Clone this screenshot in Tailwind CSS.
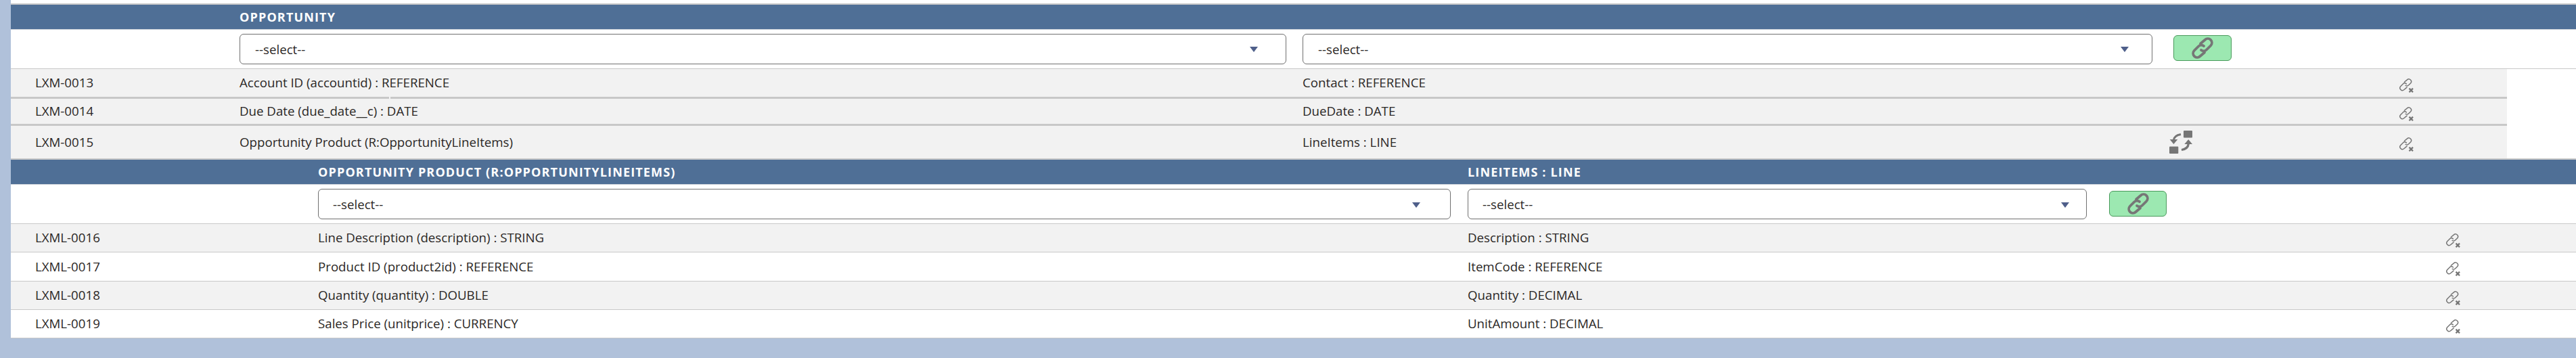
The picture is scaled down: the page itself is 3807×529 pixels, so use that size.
<!DOCTYPE html>
<html>
<head>
<meta charset="utf-8">
<script src="https://cdn.jsdelivr.net/npm/@tailwindcss/browser@4"></script>
</head>
<body class="bg-[#b0c1da] font-['Open_Sans',sans-serif] text-[18.7px] text-[#2b2826]">
<svg width="0" height="0" class="absolute">
  <defs>
    <symbol id="chain" viewBox="0 0 34 34">
      <g fill="none" stroke="currentColor" stroke-width="3.8" stroke-linecap="round">
        <path d="M14 10.5 L20.76 4.76 A6 6 0 0 1 29.24 13.24 L23 19.5 A6 6 0 0 1 15 20"/>
        <path d="M20 23.5 L13.24 29.24 A6 6 0 0 1 4.76 20.76 L11 14.5 A6 6 0 0 1 19 14"/>
      </g>
    </symbol>
    <symbol id="unlink" viewBox="0 0 22 22">
      <g transform="scale(.6)" fill="none" stroke="currentColor" stroke-width="2.5" stroke-linecap="round">
        <path d="M14 10.5 L20.76 4.76 A6 6 0 0 1 29.24 13.24 L24.5 18 A6 6 0 0 1 17 19"/>
        <path d="M20 23.5 L13.24 29.24 A6 6 0 0 1 4.76 20.76 L11 14.5 A6 6 0 0 1 19 15"/>
      </g>
      <path d="M15.5 15.6 L21 21.2 M21 15.6 L15.5 21.2" stroke="currentColor" stroke-width="2.3"/>
    </symbol>
    <symbol id="merge" viewBox="0 0 34 34">
      <rect x="21" y="0" width="13" height="10.5" rx="1" fill="currentColor"/>
      <rect x="0" y="23.5" width="13.3" height="10.5" rx="1" fill="currentColor"/>
      <path d="M17 5.5 C11 6.5 7 9 6.4 14" fill="none" stroke="currentColor" stroke-width="3.2"/>
      <path d="M0.7 13 H12.3 L6.4 20 Z" fill="currentColor"/>
      <path d="M18 28.5 C24 27.5 27.8 25 28.3 19.5" fill="none" stroke="currentColor" stroke-width="3.2"/>
      <path d="M22.3 20 H34 L28.2 13 Z" fill="currentColor"/>
    </symbol>
  </defs>
</svg>
<main class="ml-4 h-[500px] bg-white pt-[5px]">

  <section>
    <div class="grid h-[38px] grid-cols-[338px_1fr] items-center border-t-2 border-t-[#c8c8c8] bg-[#4f6f96] text-[18px] font-bold tracking-[1.15px] text-white">
      <div></div><div>OPPORTUNITY</div>
    </div>
    <div class="grid h-[59px] grid-cols-[338px_1571px_1287px_86px] border-t border-t-[#cfd4da] border-b border-b-[#c8c8c8]">
      <div></div>
      <div class="pt-[6px]">
        <div class="flex h-[45px] w-[1547px] items-center justify-between rounded-md border border-[#707070] pl-[22px] pr-[41px]"><span class="relative top-[1px]">--select--</span><span class="h-0 w-0 border-x-[6.5px] border-t-[8px] border-x-transparent border-t-[#4f5f8a]"></span></div>
      </div>
      <div class="pt-[6px]">
        <div class="flex h-[45px] w-[1256px] items-center justify-between rounded-md border border-[#707070] pl-[22px] pr-[34px]"><span class="relative top-[1px]">--select--</span><span class="h-0 w-0 border-x-[6.5px] border-t-[8px] border-x-transparent border-t-[#4f5f8a]"></span></div>
      </div>
      <div class="pt-[8px]">
        <div class="flex h-[38px] w-[86px] items-center justify-center rounded-md border border-[#4a9a5c] bg-[#9ce8b1] text-[#767676]"><svg class="h-[34px] w-[34px]"><use href="#chain"/></svg></div>
      </div>
    </div>

    <div class="w-[3689px]">
      <div class="grid h-[41px] grid-cols-[338px_1571px_1281px_339px_160px] items-center bg-[#f2f2f2]">
        <div class="pl-[36px]">LXM-0013</div><div>Account ID (accountid) : REFERENCE</div><div>Contact : REFERENCE</div><div></div>
        <div class="text-[#767676]"><svg class="relative top-[3px] h-[22px] w-[22px]"><use href="#unlink"/></svg></div>
      </div>
      <div class="relative grid h-[40px] grid-cols-[338px_1571px_1281px_339px_160px] items-center border-t-[3px] border-[#c8c8c8] bg-[#f2f2f2]">
        <span class="absolute -top-[3px] left-[559px] h-[3px] w-[2px] bg-[#f2f2f2]"></span>
        <div class="pl-[36px]">LXM-0014</div><div>Due Date (due_date__c) : DATE</div><div>DueDate : DATE</div><div></div>
        <div class="text-[#767676]"><svg class="relative top-[3px] h-[22px] w-[22px]"><use href="#unlink"/></svg></div>
      </div>
      <div class="grid h-[51px] grid-cols-[338px_1571px_1281px_339px_160px] items-center border-t-[3px] border-[#c8c8c8] bg-[#f2f2f2]">
        <div class="pl-[36px]">LXM-0015</div><div>Opportunity Product (R:OpportunityLineItems)</div><div>LineItems : LINE</div>
        <div class="text-[#767676]"><svg class="h-[34px] w-[34px]"><use href="#merge"/></svg></div>
        <div class="text-[#767676]"><svg class="relative top-[3px] h-[22px] w-[22px]"><use href="#unlink"/></svg></div>
      </div>
    </div>
  </section>

  <section>
    <div class="grid h-[38px] grid-cols-[454px_1699px_1fr] items-center border-t-2 border-t-[#c8c8c8] bg-[#4f6f96] text-[18px] font-bold tracking-[1.15px] text-white">
      <div></div><div>OPPORTUNITY PRODUCT (R:OPPORTUNITYLINEITEMS)</div><div>LINEITEMS : LINE</div>
    </div>
    <div class="grid h-[59px] grid-cols-[454px_1699px_948px_85px] border-t border-t-[#cfd4da] border-b border-b-[#c8c8c8]">
      <div></div>
      <div class="pt-[6px]">
        <div class="flex h-[45px] w-[1674px] items-center justify-between rounded-md border border-[#707070] pl-[21px] pr-[44px]"><span class="relative top-[1px]">--select--</span><span class="relative top-[1px] h-0 w-0 border-x-[6.5px] border-t-[8px] border-x-transparent border-t-[#4f5f8a]"></span></div>
      </div>
      <div class="pt-[6px]">
        <div class="flex h-[45px] w-[915px] items-center justify-between rounded-md border border-[#707070] pl-[21px] pr-[25px]"><span class="relative top-[1px]">--select--</span><span class="relative top-[1px] h-0 w-0 border-x-[6.5px] border-t-[8px] border-x-transparent border-t-[#4f5f8a]"></span></div>
      </div>
      <div class="pt-[9px]">
        <div class="flex h-[38px] w-[85px] items-center justify-center rounded-md border border-[#4a9a5c] bg-[#9ce8b1] text-[#767676]"><svg class="h-[34px] w-[34px]"><use href="#chain"/></svg></div>
      </div>
    </div>
    <div class="grid h-[41px] grid-cols-[454px_1699px_1445px_1fr] items-center bg-[#f2f2f2]">
      <div class="pl-[36px]">LXML-0016</div><div>Line Description (description) : STRING</div><div>Description : STRING</div>
      <div class="text-[#767676]"><svg class="relative top-[3px] h-[22px] w-[22px]"><use href="#unlink"/></svg></div>
    </div>
    <div class="grid h-[43px] grid-cols-[454px_1699px_1445px_1fr] items-center border-t border-[#c8c8c8] bg-white">
      <div class="pl-[36px]">LXML-0017</div><div>Product ID (product2id) : REFERENCE</div><div>ItemCode : REFERENCE</div>
      <div class="text-[#767676]"><svg class="relative top-[3px] h-[22px] w-[22px]"><use href="#unlink"/></svg></div>
    </div>
    <div class="grid h-[42px] grid-cols-[454px_1699px_1445px_1fr] items-center border-t border-[#c8c8c8] bg-[#f2f2f2]">
      <div class="pl-[36px]">LXML-0018</div><div>Quantity (quantity) : DOUBLE</div><div>Quantity : DECIMAL</div>
      <div class="text-[#767676]"><svg class="relative top-[3px] h-[22px] w-[22px]"><use href="#unlink"/></svg></div>
    </div>
    <div class="grid h-[43px] grid-cols-[454px_1699px_1445px_1fr] items-center border-t border-b border-[#c8c8c8] bg-white">
      <div class="pl-[36px]">LXML-0019</div><div>Sales Price (unitprice) : CURRENCY</div><div>UnitAmount : DECIMAL</div>
      <div class="text-[#767676]"><svg class="relative top-[3px] h-[22px] w-[22px]"><use href="#unlink"/></svg></div>
    </div>
  </section>
</main>
</body>
</html>
